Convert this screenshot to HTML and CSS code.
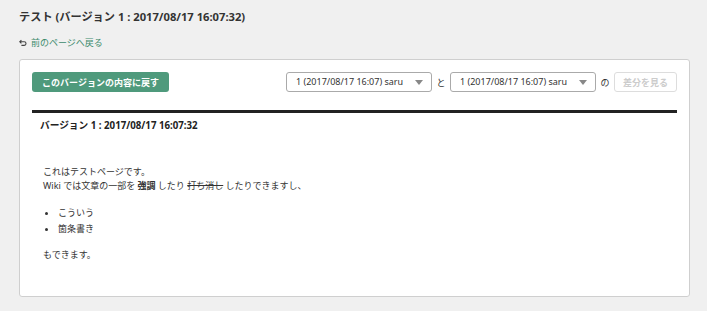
FILE: index.html
```html
<!DOCTYPE html>
<html lang="ja">
<head>
  <meta charset="UTF-8">
  <meta name="viewport" content="width=device-width, initial-scale=1.0">
  <title>テスト (バージョン 1 : 2017/08/17 16:07:32)</title>
<link rel="stylesheet" href="styles.css">
</head>
<body>
<div class="page">
  <h1 class="title">テスト (バージョン 1 : 2017/08/17 16:07:32)</h1>

  <a class="back" href="#">
    <svg class="back-icon" viewBox="0 0 10 10" width="8" height="8">
      <path d="M3 1.5 L1 3.5 L3 5.5 M1 3.5 H6.5 A2.2 2.2 0 0 1 6.5 8 H3" fill="none" stroke="#444" stroke-width="1.4"/>
    </svg>
    前のページへ戻る
  </a>

  <div class="card">
    <div class="toolbar">
      <button class="revert">このバージョンの内容に戻す</button>
      <div class="compare">
        <div class="select">1 (2017/08/17 16:07) saru<span class="arrow"></span></div>
        <span class="sep">と</span>
        <div class="select">1 (2017/08/17 16:07) saru<span class="arrow"></span></div>
        <span class="sep">の</span>
        <button class="diff" disabled>差分を見る</button>
      </div>
    </div>

    <h2 class="version">バージョン 1 : 2017/08/17 16:07:32</h2>

    <div class="body">
      <p>これはテストページです。<br>
      Wiki では文章の一部を <strong>強調</strong> したり <s>打ち消し</s> したりできますし、</p>
      <ul>
        <li>こういう</li>
        <li>箇条書き</li>
      </ul>
      <p>もできます。</p>
    </div>
  </div>
</div>
</body>
</html>
```

FILE: styles.css
```css
* {
  box-sizing: border-box;
}

body {
  margin: 0;
  background: #f0f0f0;
  font-family: "Noto Sans", "Noto Sans CJK JP", sans-serif;
  color: #333;
}

.page {
  padding: 8px 17px 0 19px;
}

.title {
  margin: 0;
  font-size: 11.2px;
  line-height: 18px;
  font-weight: bold;
  color: #333;
}

.back {
  display: flex;
  align-items: center;
  gap: 4px;
  margin-top: 10px;
  font-size: 9px;
  line-height: 14px;
  color: #3d8b6d;
  text-decoration: none;
}

.card {
  margin-top: 9px;
  height: 238px;
  background: #fff;
  border: 1px solid #cfcfcf;
  border-radius: 3px;
  padding: 12px 12px 0 12px;
}

.toolbar {
  display: flex;
  justify-content: space-between;
  align-items: center;
  height: 20px;
}

.revert {
  width: 137px;
  height: 20px;
  border: none;
  border-radius: 3px;
  background: #4f9a7c;
  color: #fff;
  font-family: inherit;
  font-size: 9px;
  font-weight: bold;
  padding: 0;
}

.compare {
  display: flex;
  align-items: center;
}

.select {
  position: relative;
  width: 146px;
  height: 20px;
  border: 1px solid #aaa;
  border-radius: 3px;
  font-size: 9px;
  line-height: 18px;
  padding-left: 9px;
  color: #333;
}

.arrow {
  position: absolute;
  right: 8px;
  top: 7px;
  border-left: 4px solid transparent;
  border-right: 4px solid transparent;
  border-top: 5px solid #888;
}

.sep {
  font-size: 9px;
  width: 18px;
  text-align: center;
}

.diff {
  width: 63px;
  height: 20px;
  background: #fff;
  border: 1px solid #ddd;
  border-radius: 3px;
  color: #ccc;
  font-family: inherit;
  font-size: 9px;
  font-weight: bold;
  padding: 0;
}

.version {
  margin: 18px 0 0;
  border-top: 3px solid #222;
  padding: 6px 0 0 8px;
  font-size: 9.7px;
  line-height: 14px;
  font-weight: bold;
  color: #222;
}

.body {
  padding: 32px 0 0 11px;
  font-size: 9px;
  line-height: 14px;
  color: #333;
}

.body p {
  margin: 0;
}

.body strong {
  font-weight: bold;
}

.body ul {
  margin: 12px 0 11px;
  padding-left: 15px;
}

.body li {
  line-height: 16px;
}
```
